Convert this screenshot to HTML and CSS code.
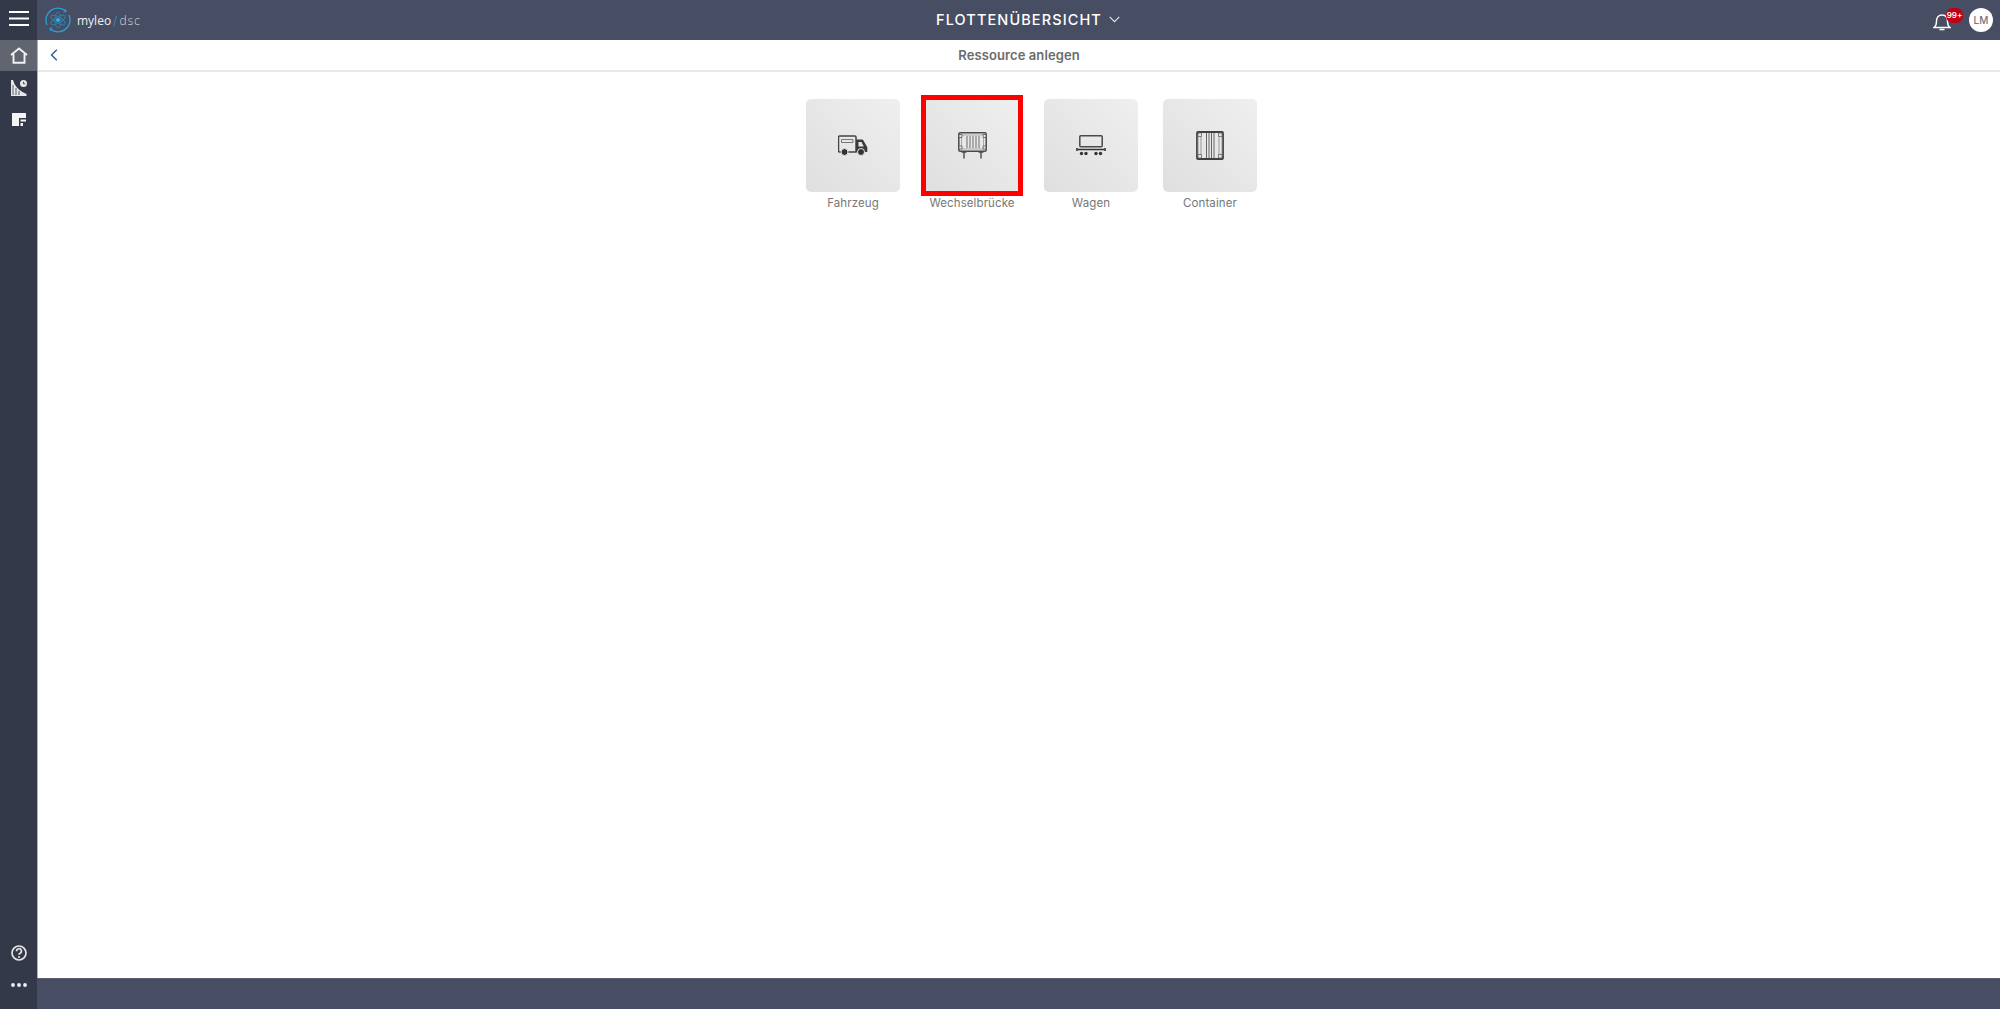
FILE: index.html
```html
<!DOCTYPE html>
<html lang="de">
<head>
<meta charset="utf-8">
<title>Ressource anlegen</title>
<link rel="stylesheet" href="styles.css">
</head>
<body>
<div class="app">
  <aside class="sidebar">
    <button class="side-btn burger" aria-label="Menü">
      <svg width="20" height="17" viewBox="0 0 20 17"><path d="M0 2h20M0 8.500h20M0 15h20" stroke="#fff" stroke-width="2"/></svg>
    </button>
    <nav class="side-nav">
      <a class="side-item active">
        <svg width="18" height="17" viewBox="0 0 18 17" fill="none"><path d="M1 8 9 1.500 17 8M3.500 7v8.700h11V7" stroke="#f2f2f2" stroke-width="1.900"/></svg>
      </a>
      <a class="side-item">
        <svg width="18" height="17" viewBox="0 0 18 17"><path d="M1 1h2l1.500 4 2 3 3 3 3 2 4 2v2H1z" fill="#e8e8e8"/><path d="M3 6v10M6 9v7M9 12v4" stroke="#353a4d" stroke-width=".8"/><circle cx="13.500" cy="4.500" r="3.500" fill="#e8e8e8"/><path d="M13.500 2.800v2h1.700" stroke="#353a4d" stroke-width=".9" fill="none"/></svg>
      </a>
      <a class="side-item">
        <svg width="16" height="15" viewBox="0 0 16 15"><path d="M1 1h14v5H8v8H1z" fill="#f4f4f4"/><path d="M9.500 7.500H15v2H9.500zM9.500 11H12v3H9.500z" fill="#f4f4f4"/></svg>
      </a>
    </nav>
    <div class="side-bottom">
      <a class="side-item">
        <svg width="16" height="16" viewBox="0 0 16 16" fill="none"><circle cx="8" cy="8" r="7" stroke="#e4e4e4" stroke-width="1.700"/><path d="M5.600 6.200a2.400 2.400 0 1 1 3.600 2c-.8.400-1.200.8-1.200 1.600" stroke="#e4e4e4" stroke-width="1.700"/><circle cx="8" cy="12" r="1" fill="#e4e4e4"/></svg>
      </a>
      <a class="side-item">
        <svg width="16" height="4" viewBox="0 0 16 4" fill="#f0f0f0"><circle cx="2" cy="2" r="1.900"/><circle cx="8" cy="2" r="1.900"/><circle cx="14" cy="2" r="1.900"/></svg>
      </a>
    </div>
  </aside>
  <div class="main">
    <header class="topbar">
      <div class="brand">
        <svg width="26" height="26" viewBox="0 0 26 26" fill="none"><path d="M20.500 3.800A12 12 0 0 0 2 18M5.500 22.200A12 12 0 0 0 24 8" stroke="#2f9fd6" stroke-width="1.300"/><path d="M20 2l1.500 2.600-3 .4M6 24l-1.500-2.600 3-.4" stroke="#2f9fd6"/><ellipse cx="13" cy="13" rx="8" ry="3" stroke="#2a7fb0" transform="rotate(30 13 13)"/><ellipse cx="13" cy="13" rx="8" ry="3" stroke="#2a7fb0" transform="rotate(-30 13 13)"/><ellipse cx="13" cy="13" rx="8" ry="3" stroke="#2a7fb0" transform="rotate(90 13 13)"/><circle cx="13" cy="13" r="2" fill="#3ab0e0"/></svg>
        <span class="brand-name">myleo</span><span class="brand-slash">/</span><span class="brand-app">dsc</span>
      </div>
      <div class="title">
        <span>FLOTTENÜBERSICHT</span>
        <svg class="title-chevron" width="11" height="7" viewBox="0 0 11 7" fill="none"><path d="m.7.800 4.800 4.800L10.300.8" stroke="#e8e8ee" stroke-width="1.100"/></svg>
      </div>
      <div class="tools">
        <div class="bell">
          <svg width="18" height="19" viewBox="0 0 18 19" fill="none"><path d="M1 15.500c2-1.500 2.500-3 2.500-6 0-4 2-6.500 5.500-6.500s5.500 2.500 5.500 6.500c0 3 .5 4.500 2.500 6z" stroke="#fff" stroke-width="1.400"/><path d="M6.500 17.500h5" stroke="#fff" stroke-width="1.600"/></svg>
          <span class="badge">99+</span>
        </div>
        <div class="avatar">LM</div>
      </div>
    </header>
    <div class="subheader">
      <a class="back" aria-label="Zurück">
        <svg width="8" height="12" viewBox="0 0 8 12" fill="none"><path d="M6.800.8 1.500 6l5.300 5.200" stroke="#2c5f8d" stroke-width="1.400"/></svg>
      </a>
      <h1 class="sub-title">Ressource anlegen</h1>
    </div>
    <main class="content">
      <div class="tiles">
        <div class="tile">
          <div class="tile-box">
            <svg width="30" height="21" viewBox="0 0 30 21" fill="none">
              <path d="M18 17H1.500a1 1 0 0 1-1-1V2a1 1 0 0 1 1-1H17a1 1 0 0 1 1 1z" stroke="#444" stroke-width="1.500"/>
              <path d="M3.500 4.500h11.500v3H3.500z" stroke="#777"/>
              <path d="M18 4.500h5.500c1 0 1.700.5 2.200 1.400l3.300 5.800c.2.400.3.800.3 1.300V17H18z" fill="#3a3a3a"/>
              <path d="M20.500 7h3l2.300 4.500h-5.300z" fill="#e6e6e6"/>
              <circle cx="6.500" cy="17" r="3.500" fill="#333" stroke="#e6e6e6"/>
              <circle cx="23" cy="17" r="3.500" fill="#333" stroke="#e6e6e6"/>
            </svg>
          </div>
          <div class="tile-label">Fahrzeug</div>
        </div>
        <div class="tile selected">
          <div class="tile-box">
            <svg width="29" height="27" viewBox="0 0 29 27" fill="none">
              <rect x=".8" y=".8" width="27.400" height="18.400" rx="1.500" stroke="#4a4a4a" stroke-width="1.500"/>
              <rect x="3.500" y="3" width="22" height="14" stroke="#999" stroke-width=".8"/>
              <path d="M9 4v12M12 4v12M15 4v12M18 4v12M21 4v12" stroke="#777" stroke-width="1.100"/>
              <path d="M1 2.500h3v3H1zM25 2.500h3v3h-3zM1 14h3v3H1zM25 14h3v3h-3z" fill="#e6e6e6" stroke="#555" stroke-width=".8"/>
              <path d="M6 20v6.500M23 20v6.500M3.500 20h5M20.500 20h5" stroke="#4a4a4a" stroke-width="1.400"/>
              <path d="M10 19.500h9" stroke="#444" stroke-dasharray="3 2"/>
            </svg>
          </div>
          <div class="tile-label">Wechselbrücke</div>
        </div>
        <div class="tile">
          <div class="tile-box">
            <svg width="30" height="21" viewBox="0 0 30 21" fill="none">
              <rect x="3.800" y=".8" width="22.400" height="11" rx="1" stroke="#4a4a4a" stroke-width="1.500"/>
              <path d="M1 14.500h28" stroke="#333" stroke-width="1.500"/>
              <path d="M0 13h2v3H0zM28 13h2v3h-2z" fill="#555"/>
              <g fill="#333"><circle cx="5.500" cy="18.500" r="1.700"/><circle cx="10" cy="18.500" r="1.700"/><circle cx="20" cy="18.500" r="1.700"/><circle cx="24.500" cy="18.500" r="1.700"/></g>
            </svg>
          </div>
          <div class="tile-label">Wagen</div>
        </div>
        <div class="tile">
          <div class="tile-box">
            <svg width="28" height="29" viewBox="0 0 28 29" fill="none">
              <rect x="1" y="1" width="26" height="27" rx="1" stroke="#3f3f3f" stroke-width="1.800"/>
              <path d="M2 4h3v21H2zM23 4h3v21h-3z" stroke="#888" stroke-width=".8"/>
              <path d="M10.500 2v25M13 2v25M15.500 2v25M18 2v25" stroke="#666" stroke-width="1"/>
              <path d="M2 2h3.500v3.500H2zM22.500 2H26v3.500h-3.500zM2 23.500h3.500V27H2zM22.500 23.500H26V27h-3.500z" fill="#e6e6e6" stroke="#666" stroke-width=".8"/>
            </svg>
          </div>
          <div class="tile-label">Container</div>
        </div>
      </div>
    </main>
    <footer class="footer"></footer>
  </div>
</div>
</body>
</html>
```
FILE: styles.css
```css
* { box-sizing: border-box; }
html, body { height: 100%; margin: 0; }
body { font-family: Inter, "Open Sans", "Liberation Sans", sans-serif; background: #fff; overflow: hidden; }

.app { display: flex; height: 1009px; }

.sidebar {
  width: 37px;
  flex: none;
  display: flex;
  flex-direction: column;
  background: #343949;
}
.side-btn {
  height: 40px;
  padding: 0;
  display: flex;
  align-items: center;
  justify-content: center;
  background: none;
  border: 0;
}
.burger svg { margin-top: -3px; }
.side-nav { display: flex; flex-direction: column; }
.side-item {
  height: 32px;
  display: flex;
  align-items: center;
  justify-content: center;
}
.side-item.active { background: #61656f; height: 31px; }
.side-bottom { margin-top: auto; padding-bottom: 8px; }

.main { flex: 1; min-width: 0; display: flex; flex-direction: column; border-left: 1px solid #aeb0ba; }

.topbar {
  height: 40px;
  flex: none;
  margin-left: -1px;
  padding: 0 7px 0 8px;
  display: grid;
  grid-template-columns: 1fr auto 1fr;
  align-items: center;
  background: #474d63;
  color: #fff;
}
.brand { display: flex; align-items: center; font-size: 12px; }
.brand svg { margin-right: 6px; }
.brand-name { color: #f0f0f2; font-family: "Open Sans", sans-serif; }
.brand-slash { color: #3a84b8; margin: 0 2px; }
.brand-app { color: #d8d9de; font-family: "Open Sans", sans-serif; letter-spacing: .9px; font-weight: 300; }

.title {
  display: flex;
  align-items: center;
  gap: 7px;
  margin: -2px -18px 0 0;
  font-size: 14.500px;
  font-weight: 500;
  letter-spacing: 1.100px;
  color: #fff;
}

.tools { display: flex; align-items: center; justify-content: flex-end; gap: 18px; }
.bell { position: relative; width: 18px; height: 19px; margin-top: 2px; }
.bell svg { display: block; }
.badge {
  position: absolute;
  left: 13px;
  top: -4px;
  width: 17px;
  height: 15px;
  border-radius: 7px;
  background: #c00012;
  color: #fff;
  font-size: 8px;
  font-weight: 600;
  line-height: 15px;
  text-align: center;
}
.avatar {
  width: 24px;
  height: 24px;
  border-radius: 50%;
  background: #fff;
  color: #70747f;
  font-size: 10px;
  font-weight: 500;
  line-height: 24px;
  text-align: center;
}

.subheader {
  height: 32px;
  flex: none;
  display: grid;
  grid-template-columns: 1fr auto 1fr;
  align-items: center;
  padding: 0 12px;
  border-bottom: 2px solid #e8e8e8;
}
.back { display: flex; }
.sub-title { margin: 0; font-size: 13px; font-weight: 600; color: #6b6b6b; letter-spacing: .1px; }

.content { flex: 1; min-height: 0; padding: 27px 0 0 25px; }
.tiles { display: flex; justify-content: center; gap: 25px; }
.tile { width: 94px; display: flex; flex-direction: column; align-items: center; }
.tile-box {
  width: 94px;
  height: 93px;
  display: flex;
  align-items: center;
  justify-content: center;
  border-radius: 5px;
  background: linear-gradient(45deg, #dfdfdf, #efefef);
}
.selected .tile-box { outline: 5px solid #ff0000; outline-offset: -1px; border-radius: 0; }
.tile-label { margin-top: 4px; font-size: 11.500px; line-height: 14px; color: #777; white-space: nowrap; letter-spacing: .1px; }

.footer { height: 31px; flex: none; margin-left: -1px; background: #474d63; border-top: 1px solid #5a5f73; }
```
